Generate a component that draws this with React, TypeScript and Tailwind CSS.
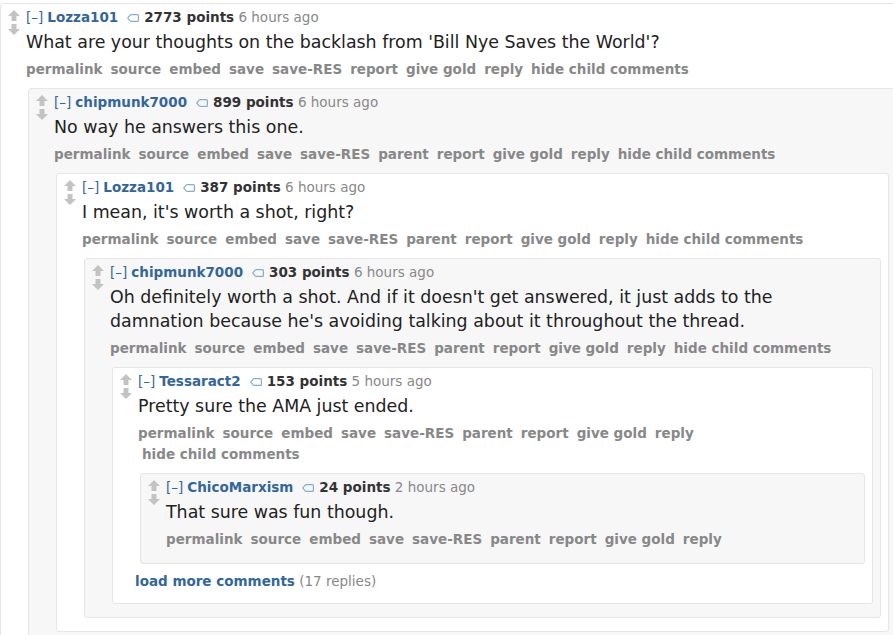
import React from 'react';

type Comment = {
    user: string;
    points: number;
    time: string;
    body: string;
    buttons: string[];
    children?: Comment[];
    more?: number;
};

const base = ['permalink', 'source', 'embed', 'save', 'save-RES'];

const thread: Comment = {
    user: 'Lozza101',
    points: 2773,
    time: '6 hours ago',
    body: "What are your thoughts on the backlash from 'Bill Nye Saves the World'?",
    buttons: [...base, 'report', 'give gold', 'reply', 'hide child comments'],
    children: [
        {
            user: 'chipmunk7000',
            points: 899,
            time: '6 hours ago',
            body: 'No way he answers this one.',
            buttons: [...base, 'parent', 'report', 'give gold', 'reply', 'hide child comments'],
            children: [
                {
                    user: 'Lozza101',
                    points: 387,
                    time: '6 hours ago',
                    body: "I mean, it's worth a shot, right?",
                    buttons: [...base, 'parent', 'report', 'give gold', 'reply', 'hide child comments'],
                    children: [
                        {
                            user: 'chipmunk7000',
                            points: 303,
                            time: '6 hours ago',
                            body: "Oh definitely worth a shot. And if it doesn't get answered, it just adds to the damnation because he's avoiding talking about it throughout the thread.",
                            buttons: [...base, 'parent', 'report', 'give gold', 'reply', 'hide child comments'],
                            children: [
                                {
                                    user: 'Tessaract2',
                                    points: 153,
                                    time: '5 hours ago',
                                    body: 'Pretty sure the AMA just ended.',
                                    buttons: [...base, 'parent', 'report', 'give gold', 'reply', 'hide child comments'],
                                    more: 17,
                                    children: [
                                        {
                                            user: 'ChicoMarxism',
                                            points: 24,
                                            time: '2 hours ago',
                                            body: 'That sure was fun though.',
                                            buttons: [...base, 'parent', 'report', 'give gold', 'reply'],
                                        },
                                    ],
                                },
                            ],
                        },
                    ],
                },
            ],
        },
    ],
};

// vote arrows
const Arrow = ({ down }: { down?: boolean }) => (
    <svg width="12" height="11" viewBox="0 0 12 11" className={down ? 'rotate-180' : ''}>
        <path d="M6 0 L12 6 L8.5 6 L8.5 11 L3.5 11 L3.5 6 L0 6 Z" fill="#c3c3c3" />
    </svg>
);

// RES tag icon next to the username
const TagIcon = () => (
    <svg width="12" height="8" viewBox="0 0 12 8" className="inline-block ml-[9px] mr-[5px] align-[0px]">
        <path
            d="M4.2 0.6 H10.4 Q11.4 0.6 11.4 1.6 V6.4 Q11.4 7.4 10.4 7.4 H4.2 Q3.6 7.4 3.1 6.9 L0.8 4 L3.1 1.1 Q3.6 0.6 4.2 0.6 Z"
            fill="none"
            stroke="#86acd2"
            strokeWidth="1.2"
        />
    </svg>
);

const CommentBox: React.FC<{ c: Comment; depth: number }> = ({ c, depth }) => {
    const bg = depth % 2 === 0 ? 'bg-white' : 'bg-[#f7f7f8]';
    return (
        <div className={`border border-[#e6e6e6] rounded-[3px] pb-[13px] ${bg}`}>
            <div className="flex">
                <div className="w-[25px] flex flex-col items-center gap-[3px] pt-[6px] shrink-0">
                    <Arrow />
                    <Arrow down />
                </div>
                <div className="flex-1 min-w-0 pr-[18px]">
                    <div className="pt-[3px] text-[13.5px] leading-[20px] whitespace-nowrap">
                        <span className="text-[#369]">[–]</span>
                        <span className="text-[#369] font-bold ml-[4px]">{c.user}</span>
                        <TagIcon />
                        <span className="text-[#333] font-bold">{c.points} points</span>
                        <span className="text-[#888]"> {c.time}</span>
                    </div>
                    <p className="mt-[3px] text-[17.4px] leading-[24px] text-[#222]">{c.body}</p>
                    <ul className="mt-[5px] flex flex-wrap text-[13.5px] leading-[21px] font-bold text-[#888]">
                        {c.buttons.map((b, i) => (
                            <li key={i} className={`whitespace-nowrap ${i === 0 ? 'pr-[4px]' : 'px-[4px]'}`}>
                                {b}
                            </li>
                        ))}
                    </ul>
                </div>
            </div>
            {c.children && (
                <div className="mt-[8px] ml-[27px] mr-[7px]">
                    {c.children.map((ch, i) => (
                        <CommentBox key={i} c={ch} depth={depth + 1} />
                    ))}
                    {c.more && (
                        <div className="mt-[8px] -ml-[5px] text-[13.5px] leading-[18px]">
                            <span className="font-bold text-[#369]">load more comments</span>
                            <span className="text-[#888]"> ({c.more} replies)</span>
                        </div>
                    )}
                </div>
            )}
        </div>
    );
};

export default function App() {
    return (
        <div
            className="w-[893px] h-[635px] overflow-hidden bg-white"
            style={{ fontFamily: '"DejaVu Sans", Verdana, sans-serif' }}
        >
            <div className="w-[905px] mt-[3px]">
                <CommentBox c={thread} depth={0} />
            </div>
        </div>
    );
}
